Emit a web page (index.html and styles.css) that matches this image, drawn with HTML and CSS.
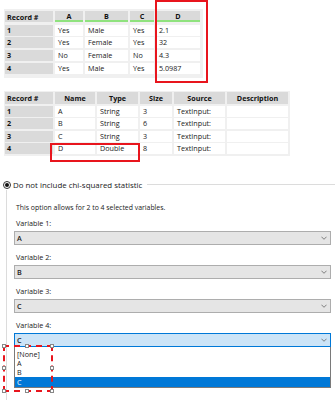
FILE: index.html
```html
<!DOCTYPE html>
<html lang="en">
<head>
    <meta charset="UTF-8">
    <title>Contingency Table</title>
    <link rel="stylesheet" href="styles.css">
</head>
<body>
<main>
    <div class="data-wrap">
        <div class="grid data-grid">
            <div class="hd first">Record #</div>
            <div class="hd col">A</div>
            <div class="hd col">B</div>
            <div class="hd col">C</div>
            <div class="hd col">D</div>

            <div class="rn">1</div><div class="cell">Yes</div><div class="cell">Male</div><div class="cell">Yes</div><div class="cell">2.1</div>
            <div class="rn">2</div><div class="cell">Yes</div><div class="cell">Female</div><div class="cell">Yes</div><div class="cell">32</div>
            <div class="rn">3</div><div class="cell">No</div><div class="cell">Female</div><div class="cell">No</div><div class="cell">4.3</div>
            <div class="rn">4</div><div class="cell">Yes</div><div class="cell">Male</div><div class="cell">Yes</div><div class="cell">5.0987</div>
        </div>
        <div class="mark mark-d"></div>
    </div>

    <div class="meta-wrap">
        <div class="grid meta-grid">
            <div class="hd first">Record #</div>
            <div class="hd">Name</div>
            <div class="hd">Type</div>
            <div class="hd">Size</div>
            <div class="hd">Source</div>
            <div class="hd">Description</div>

            <div class="rn">1</div><div class="cell">A</div><div class="cell">String</div><div class="cell">3</div><div class="cell">TextInput:</div><div class="cell"></div>
            <div class="rn">2</div><div class="cell">B</div><div class="cell">String</div><div class="cell">6</div><div class="cell">TextInput:</div><div class="cell"></div>
            <div class="rn">3</div><div class="cell">C</div><div class="cell">String</div><div class="cell">3</div><div class="cell">TextInput:</div><div class="cell"></div>
            <div class="rn">4</div><div class="cell">D</div><div class="cell">Double</div><div class="cell">8</div><div class="cell">TextInput:</div><div class="cell"></div>
        </div>
        <div class="mark mark-type"></div>
    </div>

    <section class="group">
        <div class="legend">
            <span class="radio"><span class="dot"></span></span>
            <span class="legend-text">Do not include chi-squared statistic</span>
            <span class="legend-line"></span>
        </div>
        <div class="group-body">
            <p class="note">This option allows for 2 to 4 selected variables.</p>

            <label class="var-label">Variable 1:</label>
            <div class="select"><span>A</span><svg class="chev" viewBox="0 0 7 4"><path d="M0.5 0.5 L3.5 3.5 L6.5 0.5"/></svg></div>

            <label class="var-label">Variable 2:</label>
            <div class="select"><span>B</span><svg class="chev" viewBox="0 0 7 4"><path d="M0.5 0.5 L3.5 3.5 L6.5 0.5"/></svg></div>

            <label class="var-label">Variable 3:</label>
            <div class="select"><span>C</span><svg class="chev" viewBox="0 0 7 4"><path d="M0.5 0.5 L3.5 3.5 L6.5 0.5"/></svg></div>

            <label class="var-label">Variable 4:</label>
            <div class="dropdown-open">
                <div class="select focus"><span>C</span><svg class="chev" viewBox="0 0 7 4"><path d="M0.5 0.5 L3.5 3.5 L6.5 0.5"/></svg></div>
                <ul class="options">
                    <li>[None]</li>
                    <li>A</li>
                    <li>B</li>
                    <li class="selected">C</li>
                </ul>
                <div class="sel-box">
                    <i class="h tl"></i><i class="h tm"></i><i class="h tr"></i>
                    <i class="h ml"></i><i class="h mr"></i>
                    <i class="h bl"></i><i class="h bm"></i><i class="h br"></i>
                </div>
            </div>
        </div>
    </section>
</main>
</body>
</html>
```

FILE: styles.css
```css
body {
    margin: 0;
    background: #fff;
    font-family: "Open Sans", "Noto Sans", sans-serif;
    font-size: 7.2px;
    color: #1a1a1a;
    overflow: hidden;
}
main {
    width: 335px;
    height: 400px;
    overflow: hidden;
}

/* grids */
.data-wrap, .meta-wrap {
    position: relative;
    margin-left: 4px;
    width: max-content;
}
.data-wrap {
    padding-top: 9px;
}
.meta-wrap {
    margin-top: 13px;
}
.grid {
    display: grid;
    background: #f0f0f0;
    column-gap: 2px;
    row-gap: 1.67px;
}
.data-grid {
    grid-template-columns: 48px 28px 43px 24px 44px;
    grid-template-rows: 12px repeat(4, 11px);
    padding: 2px 3px 4px 1px;
}
.data-grid .hd {
    margin-bottom: 1.3px;
}
.meta-grid {
    grid-template-columns: 48px 40px 41px 32px 51px 61px;
    grid-template-rows: 13px repeat(4, 11px);
    row-gap: 1.33px;
    padding: 1px 2px 2px 1px;
}
.meta-grid .hd {
    margin-bottom: 0.7px;
}
.hd {
    background: #dadada;
    font-weight: 700;
    text-align: center;
    line-height: 12px;
    color: #111;
}
.hd.first {
    text-align: left;
    padding-left: 2px;
}
.hd.col {
    border-bottom: 2px solid #8fe27e;
    line-height: 11px;
}
.rn {
    background: #dadada;
    font-weight: 700;
    padding-left: 2px;
    line-height: 10px;
    color: #111;
}
.cell {
    background: #fff;
    padding-left: 3px;
    line-height: 11px;
}

/* red annotation frames */
.mark {
    position: absolute;
    border: 2px solid #e8151d;
}
.mark-d {
    left: 151px;
    top: 0;
    width: 49px;
    height: 79px;
}
.mark-type {
    left: 46px;
    top: 52px;
    width: 86px;
    height: 15px;
}

/* option group */
.group {
    margin-top: 24px;
}
.legend {
    display: flex;
    align-items: center;
    height: 10px;
    padding-left: 3px;
}
.radio {
    width: 6px;
    height: 6px;
    border: 1px solid #333;
    border-radius: 50%;
    display: flex;
    align-items: center;
    justify-content: center;
}
.dot {
    width: 4px;
    height: 4px;
    border-radius: 50%;
    background: #111;
}
.legend-text {
    margin-left: 2px;
    font-size: 7.9px;
}
.legend-line {
    flex: 1;
    height: 1px;
    background: #dcdcdc;
    margin-left: 5px;
}
.group-body {
    margin-left: 6px;
    border-left: 1px solid #dcdcdc;
    padding: 13px 4px 40px 7px;
}
.note {
    margin: 0 0 5px;
    padding-left: 2px;
    line-height: 10px;
    font-size: 6.9px;
}
.var-label {
    display: block;
    padding-left: 2px;
    line-height: 10px;
    margin-bottom: 3px;
}
.select {
    height: 12px;
    border: 1px solid #adadad;
    background: #e5e5e5;
    display: flex;
    align-items: center;
    justify-content: space-between;
    padding: 0 3px 0 2px;
    margin-bottom: 7px;
}
.select span {
    font-weight: 600;
}
.chev {
    width: 6px;
    height: 4px;
}
.chev path {
    fill: none;
    stroke: #606060;
    stroke-width: 0.9;
}
.select.focus {
    background: #cce4f7;
    border-color: #0078d7;
    margin-bottom: 0;
}

/* open dropdown list */
.dropdown-open {
    position: relative;
}
.options {
    list-style: none;
    margin: 0;
    padding: 3px 0 0;
    border: 1px solid #7a7a7a;
    border-top: none;
    background: #fff;
}
.options li {
    height: 9px;
    line-height: 9px;
    padding-left: 2px;
}
.options li.selected {
    background: #0078d7;
    color: #fff;
    height: 10px;
    line-height: 10px;
}

/* selection frame around the list items */
.sel-box {
    position: absolute;
    left: -11px;
    top: 12px;
    width: 46px;
    height: 43px;
    border: 2px dashed #e8151d;
}
.h {
    position: absolute;
    width: 2px;
    height: 2px;
    background: #fff;
    border: 1px solid #888;
}
.tl { left: -3px; top: -3px; }
.tm { left: 20px; top: -3px; }
.tr { right: -3px; top: -3px; }
.ml { left: -3px; top: 19px; }
.mr { right: -3px; top: 19px; }
.bl { left: -3px; bottom: -3px; }
.bm { left: 20px; bottom: -3px; }
.br { right: -3px; bottom: -3px; }
```
